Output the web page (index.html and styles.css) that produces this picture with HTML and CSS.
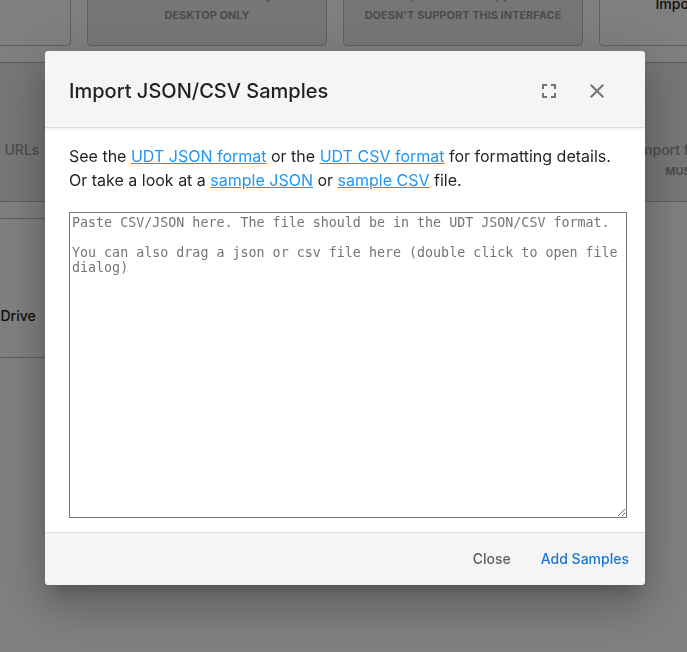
FILE: index.html
```html
<!DOCTYPE html>
<html lang="en">
<head>
<meta charset="utf-8">
<meta name="viewport" content="width=device-width, initial-scale=1">
<title>Import Samples</title>
<link rel="stylesheet" href="styles.css">
</head>
<body>
<main class="import-grid">
  <button class="card"><span class="card-title">Upload Files</span></button>
  <button class="card" disabled><span class="card-title">Files from Directory</span><span class="card-note">Desktop Only</span></button>
  <button class="card" disabled><span class="card-title">Import Text Snippets</span><span class="card-note">Doesn't support this interface</span></button>
  <button class="card"><span class="card-title">Import Toy Dataset</span></button>
  <button class="card" disabled><span class="card-title">Import from Youtube URLs</span><span class="card-note">Desktop Only</span></button>
  <button class="card"><span class="card-title">Import from COCO</span></button>
  <button class="card"><span class="card-title">Import JSON/CSV</span></button>
  <button class="card" disabled><span class="card-title">Import from S3 / Cognito</span><span class="card-note">Must be signed in</span></button>
  <button class="card"><span class="card-title">Import from Google Drive</span></button>
</main>
<div class="overlay">
  <section class="dialog" role="dialog" aria-modal="true" aria-labelledby="dialog-title">
    <header class="dialog-header">
      <h2 class="dialog-title" id="dialog-title">Import JSON/CSV Samples</h2>
      <button class="icon-button" aria-label="Fullscreen">
        <svg viewBox="0 0 24 24"><path d="M7 14H5v5h5v-2H7v-3zm-2-4h2V7h3V5H5v5zm12 7h-3v2h5v-5h-2v3zM14 5v2h3v3h2V5h-5z"/></svg>
      </button>
      <button class="icon-button" aria-label="Close dialog">
        <svg viewBox="0 0 24 24"><path d="M19 6.41L17.59 5 12 10.59 6.41 5 5 6.41 10.59 12 5 17.59 6.41 19 12 13.41 17.59 19 19 17.59 13.41 12z"/></svg>
      </button>
    </header>
    <div class="dialog-body">
      <p class="intro">See the <a href="#">UDT JSON format</a> or the <a href="#">UDT CSV format</a> for formatting details. Or take a look at a <a href="#">sample JSON</a> or <a href="#">sample CSV</a> file.</p>
      <textarea class="samples" aria-label="Samples" placeholder="Paste CSV/JSON here. The file should be in the UDT JSON/CSV format.&#10;&#10;You can also drag a json or csv file here (double click to open file dialog)"></textarea>
    </div>
    <footer class="dialog-footer">
      <button class="action">Close</button>
      <button class="action action-primary">Add Samples</button>
    </footer>
  </section>
</div>
</body>
</html>
```
FILE: styles.css
```css
* {
  box-sizing: border-box;
}

body {
  margin: 0;
  min-height: 100vh;
  overflow: hidden;
  background: #fff;
  color: rgba(0, 0, 0, 0.87);
  font-family: Inter, sans-serif;
}

button {
  margin: 0;
  border: 0;
  background: none;
  color: inherit;
  font-family: inherit;
}

/* The grid is scrolled partly above the window behind the dialog. */
.import-grid {
  display: grid;
  grid-template-columns: repeat(4, 240px);
  grid-auto-rows: 140px;
  justify-content: center;
  gap: 16px;
  margin-top: -94px;
  padding-right: 17px;
}

.card {
  display: flex;
  flex-direction: column;
  align-items: center;
  padding: 87px 0 0;
  border: 1px solid #bbb;
  border-radius: 4px;
  color: #222;
  font-size: 14px;
  font-weight: 500;
  line-height: 20px;
}

.card:disabled {
  padding-top: 77px;
  background: #ececec;
  color: #999;
}

.card-note {
  color: #989898;
  font-size: 11px;
  font-weight: 700;
  line-height: 22px;
  text-transform: uppercase;
}

.overlay {
  position: fixed;
  inset: 0;
  display: flex;
  align-items: center;
  justify-content: center;
  padding: 0 0 16px 3px;
  background: rgba(0, 0, 0, 0.5);
}

.dialog {
  width: 100%;
  max-width: 600px;
  border-radius: 4px;
  overflow: hidden;
  background: #fff;
  box-shadow:
    0 11px 15px -7px rgba(0, 0, 0, 0.2),
    0 24px 38px 3px rgba(0, 0, 0, 0.14),
    0 9px 46px 8px rgba(0, 0, 0, 0.12);
}

.dialog-header {
  display: flex;
  align-items: center;
  padding: 18px 24px 14px;
  border-bottom: 1px solid #ddd;
  background: #f5f5f5;
  box-shadow: 0 1px 4px rgba(0, 0, 0, 0.08);
}

.dialog-title {
  flex: 1;
  margin: 0;
  font-size: 20px;
  font-weight: 500;
  line-height: 32px;
}

.icon-button {
  display: flex;
  padding: 10px 12px;
  color: #757575;
}

.icon-button svg {
  width: 24px;
  height: 24px;
  fill: currentColor;
}

.dialog-body {
  padding: 16px 24px 14px;
}

.intro {
  margin: 0 0 20px;
  font-size: 16px;
  line-height: 24px;
}

.intro a {
  color: #2196f3;
}

.samples {
  display: block;
  box-sizing: content-box;
  width: 100%;
  height: 300px;
  margin: 0;
  padding: 2px;
  border: 1px solid #767676;
  font-family: "DejaVu Sans Mono", monospace;
  line-height: 15px;
}

.dialog-footer {
  display: flex;
  justify-content: flex-end;
  gap: 14px;
  padding: 8px;
  border-top: 1px solid #ddd;
  background: #f5f5f5;
}

.action {
  padding: 6px 8px;
  color: #616161;
  font-size: 14px;
  font-weight: 500;
  line-height: 24px;
}

.action-primary {
  color: #1976d2;
}
```
